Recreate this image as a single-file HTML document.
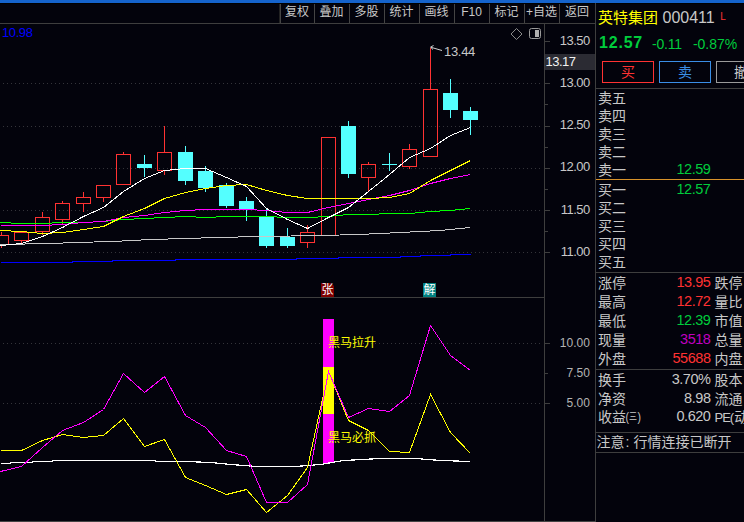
<!DOCTYPE html>
<html lang="zh-CN">
<head>
<meta charset="utf-8">
<title>英特集团 000411</title>
<style>
html,body{margin:0;padding:0;}
body{width:744px;height:522px;overflow:hidden;background:#03030c;font-family:"Liberation Sans","Noto Sans CJK SC",sans-serif;position:relative;}
#app{position:absolute;left:0;top:0;width:744px;height:522px;overflow:hidden;background:#03030c;}
#app>div{position:absolute;box-sizing:border-box;}
.lb{display:flex;align-items:center;white-space:nowrap;line-height:1;}
.lb svg{display:block;flex:none;}
.cj{font-family:"Liberation Sans","Noto Sans CJK SC",sans-serif;flex:none;display:block;line-height:1;}
.ch{position:absolute;display:block;}
.ax{font-size:13px;color:#c8c8c8;letter-spacing:-0.5px;}
.ax2{font-size:12px;color:#b4b4b4;}
.num{font-size:14.5px;letter-spacing:-0.45px;}
</style>
</head>
<body>
<div id="app">
<div style="left:0px;top:0px;width:744px;height:3px;background:#1563cc"></div>
<div style="left:0px;top:3px;width:744px;height:1px;background:#000"></div>
<div style="left:0px;top:23px;width:596px;height:1px;background:#3e3e3e"></div>
<div style="left:279px;top:4px;width:1px;height:19px;background:#222"></div>
<div style="left:280px;top:4px;width:1px;height:19px;background:#444"></div>
<div style="left:314px;top:4px;width:1px;height:19px;background:#444"></div>
<div style="left:349px;top:4px;width:1px;height:19px;background:#444"></div>
<div style="left:384px;top:4px;width:1px;height:19px;background:#444"></div>
<div style="left:419px;top:4px;width:1px;height:19px;background:#444"></div>
<div style="left:454px;top:4px;width:1px;height:19px;background:#444"></div>
<div style="left:489px;top:4px;width:1px;height:19px;background:#444"></div>
<div style="left:524px;top:4px;width:1px;height:19px;background:#444"></div>
<div style="left:559px;top:4px;width:1px;height:19px;background:#444"></div>
<div class="lb" style="left:197.0px;width:200px;justify-content:center;top:5.0px;height:14px;"><span class="cj" style="font-size:12px;color:#c8c8c8;">复权</span></div>
<div class="lb" style="left:231.5px;width:200px;justify-content:center;top:5.0px;height:14px;"><span class="cj" style="font-size:12px;color:#c8c8c8;">叠加</span></div>
<div class="lb" style="left:266.5px;width:200px;justify-content:center;top:5.0px;height:14px;"><span class="cj" style="font-size:12px;color:#c8c8c8;">多股</span></div>
<div class="lb" style="left:301.5px;width:200px;justify-content:center;top:5.0px;height:14px;"><span class="cj" style="font-size:12px;color:#c8c8c8;">统计</span></div>
<div class="lb" style="left:336.5px;width:200px;justify-content:center;top:5.0px;height:14px;"><span class="cj" style="font-size:12px;color:#c8c8c8;">画线</span></div>
<div class="lb" style="left:371.5px;width:200px;justify-content:center;top:5.0px;height:14px;"><span style="font-size:12px;color:#c8c8c8;">F10</span></div>
<div class="lb" style="left:406.5px;width:200px;justify-content:center;top:5.0px;height:14px;"><span class="cj" style="font-size:12px;color:#c8c8c8;">标记</span></div>
<div class="lb" style="left:441.5px;width:200px;justify-content:center;top:5.0px;height:14px;"><span style="font-size:12px;color:#c8c8c8;">+</span><span class="cj" style="font-size:12px;color:#c8c8c8;">自选</span></div>
<div class="lb" style="left:477.0px;width:200px;justify-content:center;top:5.0px;height:14px;"><span class="cj" style="font-size:12px;color:#c8c8c8;">返回</span></div>
<div style="left:544px;top:24px;width:1px;height:498px;background:#3e3e3e"></div>
<div style="left:595px;top:3px;width:1px;height:519px;background:#3e3e3e"></div>
<div style="left:0px;top:297px;width:545px;height:1px;background:#3e3e3e"></div>
<div style="left:0px;top:521px;width:596px;height:1px;background:#444"></div>
<div class="lb" style="left:2px;top:25.5px;height:14px;"><span style="font-size:13px;color:#0000ff;letter-spacing:-0.4px">10.98</span></div>
<div style="left:545px;top:41px;width:5px;height:1px;background:#3e3e3e"></div>
<div class="lb" style="right:154.20000000000005px;top:33.0px;height:14px;"><span class="ax">13.50</span></div>
<div style="left:545px;top:83px;width:5px;height:1px;background:#3e3e3e"></div>
<div class="lb" style="right:154.20000000000005px;top:75.25px;height:14px;"><span class="ax">13.00</span></div>
<div style="left:545px;top:126px;width:5px;height:1px;background:#3e3e3e"></div>
<div class="lb" style="right:154.20000000000005px;top:117.5px;height:14px;"><span class="ax">12.50</span></div>
<div style="left:545px;top:168px;width:5px;height:1px;background:#3e3e3e"></div>
<div class="lb" style="right:154.20000000000005px;top:159.75px;height:14px;"><span class="ax">12.00</span></div>
<div style="left:545px;top:210px;width:5px;height:1px;background:#3e3e3e"></div>
<div class="lb" style="right:154.20000000000005px;top:202.0px;height:14px;"><span class="ax">11.50</span></div>
<div style="left:545px;top:252px;width:5px;height:1px;background:#3e3e3e"></div>
<div class="lb" style="right:154.20000000000005px;top:244.25px;height:14px;"><span class="ax">11.00</span></div>
<div style="left:545px;top:62px;width:3px;height:1px;background:#3e3e3e"></div>
<div style="left:545px;top:104px;width:3px;height:1px;background:#3e3e3e"></div>
<div style="left:545px;top:147px;width:3px;height:1px;background:#3e3e3e"></div>
<div style="left:545px;top:189px;width:3px;height:1px;background:#3e3e3e"></div>
<div style="left:545px;top:231px;width:3px;height:1px;background:#3e3e3e"></div>
<div style="left:545px;top:54px;width:50px;height:16px;background:#2b2b33"></div>
<div class="lb" style="left:545.5px;top:54.0px;height:14px;"><span class="ax" style="color:#f0f0f0">13.17</span></div>
<div style="left:545px;top:343px;width:5px;height:1px;background:#3e3e3e"></div>
<div class="lb" style="right:154.20000000000005px;top:336.0px;height:14px;"><span class="ax2">10.00</span></div>
<div style="left:545px;top:373px;width:3px;height:1px;background:#3e3e3e"></div>
<div class="lb" style="right:154.20000000000005px;top:366.0px;height:14px;"><span class="ax2">7.50</span></div>
<div style="left:545px;top:403px;width:5px;height:1px;background:#3e3e3e"></div>
<div class="lb" style="right:154.20000000000005px;top:396.0px;height:14px;"><span class="ax2">5.00</span></div>
<div style="left:3px;top:83px;width:538px;height:1px;background:repeating-linear-gradient(90deg,#34343a 0 1px,transparent 1px 4px)"></div>
<div style="left:3px;top:126px;width:538px;height:1px;background:repeating-linear-gradient(90deg,#34343a 0 1px,transparent 1px 4px)"></div>
<div style="left:3px;top:168px;width:538px;height:1px;background:repeating-linear-gradient(90deg,#34343a 0 1px,transparent 1px 4px)"></div>
<div style="left:3px;top:210px;width:538px;height:1px;background:repeating-linear-gradient(90deg,#34343a 0 1px,transparent 1px 4px)"></div>
<div style="left:3px;top:252px;width:538px;height:1px;background:repeating-linear-gradient(90deg,#34343a 0 1px,transparent 1px 4px)"></div>
<div style="left:3px;top:343px;width:538px;height:1px;background:repeating-linear-gradient(90deg,#34343a 0 1px,transparent 1px 4px)"></div>
<div style="left:3px;top:403px;width:538px;height:1px;background:repeating-linear-gradient(90deg,#34343a 0 1px,transparent 1px 4px)"></div>
<svg class="ch" style="left:0;top:0" width="545" height="298" viewBox="0 0 545 298"><rect x="1" y="232" width="1" height="3" fill="#ff3232"/><rect x="1" y="245" width="1" height="3" fill="#ff3232"/><rect x="-5.5" y="235.5" width="14" height="9" fill="none" stroke="#ff3232" stroke-width="1"/><rect x="21" y="231" width="1" height="1" fill="#ff3232"/><rect x="21" y="241" width="1" height="2" fill="#ff3232"/><rect x="14.5" y="232.5" width="14" height="8" fill="none" stroke="#ff3232" stroke-width="1"/><rect x="42" y="212" width="1" height="5" fill="#ff3232"/><rect x="42" y="232" width="1" height="3" fill="#ff3232"/><rect x="35.5" y="217.5" width="14" height="14" fill="none" stroke="#ff3232" stroke-width="1"/><rect x="62" y="201" width="1" height="2" fill="#ff3232"/><rect x="62" y="220" width="1" height="4" fill="#ff3232"/><rect x="55.5" y="203.5" width="14" height="16" fill="none" stroke="#ff3232" stroke-width="1"/><rect x="83" y="192" width="1" height="5" fill="#ff3232"/><rect x="83" y="204" width="1" height="8" fill="#ff3232"/><rect x="76.5" y="197.5" width="14" height="6" fill="none" stroke="#ff3232" stroke-width="1"/><rect x="103" y="198" width="1" height="4" fill="#ff3232"/><rect x="96.5" y="185.5" width="14" height="12" fill="none" stroke="#ff3232" stroke-width="1"/><rect x="123" y="152" width="1" height="2" fill="#ff3232"/><rect x="116.5" y="154.5" width="14" height="30" fill="none" stroke="#ff3232" stroke-width="1"/><rect x="144" y="155" width="1" height="22" fill="#54ffff"/><rect x="137" y="164" width="15" height="4" fill="#54ffff"/><rect x="164" y="126" width="1" height="26" fill="#ff3232"/><rect x="164" y="171" width="1" height="4" fill="#ff3232"/><rect x="157.5" y="152.5" width="14" height="18" fill="none" stroke="#ff3232" stroke-width="1"/><rect x="185" y="146" width="1" height="39" fill="#54ffff"/><rect x="178" y="152" width="15" height="29" fill="#54ffff"/><rect x="205" y="166" width="1" height="26" fill="#54ffff"/><rect x="198" y="171" width="15" height="17" fill="#54ffff"/><rect x="226" y="183" width="1" height="25" fill="#54ffff"/><rect x="219" y="185" width="15" height="21" fill="#54ffff"/><rect x="246" y="197" width="1" height="24" fill="#54ffff"/><rect x="239" y="201" width="15" height="8" fill="#54ffff"/><rect x="266" y="208" width="1" height="40" fill="#54ffff"/><rect x="259" y="216" width="15" height="30" fill="#54ffff"/><rect x="287" y="228" width="1" height="20" fill="#54ffff"/><rect x="280" y="237" width="15" height="9" fill="#54ffff"/><rect x="307" y="225" width="1" height="7" fill="#ff3232"/><rect x="307" y="243" width="1" height="5" fill="#ff3232"/><rect x="300.5" y="232.5" width="14" height="10" fill="none" stroke="#ff3232" stroke-width="1"/><rect x="321.5" y="137.5" width="14" height="98" fill="none" stroke="#ff3232" stroke-width="1"/><rect x="348" y="121" width="1" height="57" fill="#54ffff"/><rect x="341" y="126" width="15" height="48" fill="#54ffff"/><rect x="368" y="162" width="1" height="2" fill="#ff3232"/><rect x="368" y="178" width="1" height="13" fill="#ff3232"/><rect x="361.5" y="164.5" width="14" height="13" fill="none" stroke="#ff3232" stroke-width="1"/><rect x="389" y="153" width="1" height="18" fill="#54ffff"/><rect x="382" y="164" width="15" height="1" fill="#54ffff"/><rect x="409" y="144" width="1" height="5" fill="#ff3232"/><rect x="409" y="167" width="1" height="2" fill="#ff3232"/><rect x="402.5" y="149.5" width="14" height="17" fill="none" stroke="#ff3232" stroke-width="1"/><rect x="430" y="48" width="1" height="41" fill="#ff3232"/><rect x="423.5" y="89.5" width="14" height="67" fill="none" stroke="#ff3232" stroke-width="1"/><rect x="450" y="79" width="1" height="39" fill="#54ffff"/><rect x="443" y="93" width="15" height="17" fill="#54ffff"/><rect x="470" y="107" width="1" height="28" fill="#54ffff"/><rect x="463" y="111" width="15" height="9" fill="#54ffff"/><polyline points="0.5,262.5 72.5,262.5 72.5,261.5 112.5,261.5 112.5,260.5 175.5,260.5 175.5,259.5 296.5,259.5 296.5,258.5 338.5,258.5 338.5,257.5 400.5,257.5 400.5,256.5 420.5,256.5 420.5,255.5 450.5,255.5 450.5,254.5 470.5,254.5" fill="none" stroke="#0000ff" stroke-width="1.0" shape-rendering="crispEdges"/><polyline points="0.5,244.5 50.5,243.5 75.5,242.5 112.5,241.5 150.5,239.5 186.5,238.5 216.5,237.5 260.5,236.5 321.5,235.5 358.5,234.5 400.5,232.5 440.5,230.5 470.5,227.5" fill="none" stroke="#c8c8c8" stroke-width="1.0" shape-rendering="crispEdges"/><polyline points="0.5,222.5 21.5,223.5 42.5,223.5 62.5,222.5 83.5,222.5 103.5,221.5 123.5,219.5 144.5,218.5 164.5,217.5 185.5,216.5 205.5,217.5 226.5,216.5 246.5,216.5 266.5,216.5 287.5,217.5 307.5,217.5 328.5,216.5 348.5,214.5 368.5,214.5 389.5,213.5 409.5,213.5 430.5,211.5 450.5,210.5 470.5,208.5" fill="none" stroke="#00ff00" stroke-width="1.0" shape-rendering="crispEdges"/><polyline points="0.5,225.5 21.5,225.5 42.5,225.5 62.5,224.5 83.5,222.5 103.5,221.5 123.5,217.5 144.5,215.5 164.5,212.5 185.5,210.5 205.5,209.5 226.5,209.5 246.5,209.5 266.5,210.5 287.5,212.5 307.5,212.5 328.5,207.5 348.5,203.5 368.5,199.5 389.5,195.5 409.5,190.5 430.5,183.5 450.5,178.5 470.5,174.5" fill="none" stroke="#ff00ff" stroke-width="1.0" shape-rendering="crispEdges"/><polyline points="0.5,230.5 21.5,231.5 42.5,233.5 62.5,232.5 83.5,229.5 103.5,226.5 123.5,216.5 144.5,208.5 164.5,198.5 185.5,192.5 205.5,188.5 226.5,185.5 246.5,184.5 266.5,190.5 287.5,195.5 307.5,198.5 328.5,198.5 348.5,198.5 368.5,198.5 389.5,197.5 409.5,193.5 430.5,180.5 450.5,170.5 470.5,160.5" fill="none" stroke="#ffff00" stroke-width="1.0" shape-rendering="crispEdges"/><polyline points="0.5,245.5 21.5,243.5 42.5,236.5 62.5,227.5 83.5,216.5 103.5,207.5 123.5,191.5 144.5,178.5 164.5,170.5 185.5,168.5 205.5,168.5 226.5,177.5 246.5,186.5 266.5,208.5 287.5,219.5 307.5,228.5 328.5,217.5 348.5,207.5 368.5,191.5 389.5,174.5 409.5,157.5 430.5,148.5 450.5,135.5 470.5,127.5" fill="none" stroke="#ffffff" stroke-width="1.0" shape-rendering="crispEdges"/><path d="M442 50.5 L431 47.3 M433.5 45.5 L430.5 47.2 L433 49.5" fill="none" stroke="#d0d0d0" stroke-width="1"/><path d="M516.5 28.5 L522 34 L516.5 39.5 L511 34 Z" fill="none" stroke="#8a8a8a" stroke-width="1"/><rect x="529.5" y="28.5" width="11" height="10" rx="2" fill="none" stroke="#9a9a9a" stroke-width="1"/><rect x="535" y="30" width="4" height="7" fill="#b0b0b0"/></svg>
<div class="lb" style="left:444px;top:44.2px;height:14px;"><span style="font-size:13px;color:#c8c8c8;letter-spacing:-0.3px">13.44</span></div>
<div style="left:321px;top:283px;width:13px;height:14px;background:#800000;clip-path:polygon(0 0,10px 0,13px 3px,13px 14px,0 14px)"></div>
<div class="lb" style="left:227.5px;width:200px;justify-content:center;top:284.0px;height:12px;"><span class="cj" style="font-size:12px;color:#ffffff;">张</span></div>
<div style="left:423px;top:283px;width:13px;height:14px;background:#008080"></div>
<div class="lb" style="left:329.5px;width:200px;justify-content:center;top:284.0px;height:12px;"><span class="cj" style="font-size:12px;color:#ffffff;">解</span></div>
<svg class="ch" style="left:0;top:298px" width="545" height="222" viewBox="0 298 545 222"><rect x="323" y="319" width="11" height="144" fill="#ff00ff"/><rect x="323" y="367" width="11" height="47" fill="#ffff00"/><polyline points="0.5,463.5 10.5,463.5 10.5,462.5 32.5,462.5 32.5,461.5 52.5,461.5 52.5,460.5 155.5,460.5 155.5,461.5 186.5,461.5 210.5,462.5 230.5,464.5 257.5,466.5 295.5,466.5 320.5,464.5 343.5,460.5 380.5,458.5 415.5,458.5 440.5,460.5 470.5,461.5" fill="none" stroke="#ffffff" stroke-width="1.2" shape-rendering="crispEdges"/><polyline points="0.5,450.5 21.5,450.5 42.5,440.5 62.5,434.5 83.5,437.5 103.5,435.5 123.5,418.5 144.5,446.5 164.5,439.5 185.5,477.5 205.5,485.5 226.5,494.5 246.5,489.5 266.5,512.5 287.5,495.5 307.5,467.5 328.5,371.5 348.5,420.5 368.5,430.5 389.5,451.5 409.5,452.5 430.5,394.5 450.5,432.5 470.5,453.5" fill="none" stroke="#ffff00" stroke-width="1.0" shape-rendering="crispEdges"/><polyline points="0.5,471.5 21.5,466.5 42.5,447.5 62.5,430.5 83.5,422.5 103.5,409.5 123.5,373.5 144.5,392.5 164.5,376.5 185.5,415.5 205.5,427.5 226.5,450.5 246.5,456.5 266.5,502.5 287.5,502.5 307.5,484.5 328.5,371.5 348.5,417.5 368.5,408.5 389.5,411.5 409.5,395.5 430.5,325.5 450.5,355.5 470.5,370.5" fill="none" stroke="#ff00ff" stroke-width="1.0" shape-rendering="crispEdges"/></svg>
<div class="lb" style="left:328px;top:337.0px;height:12px;"><span class="cj" style="font-size:12px;color:#ffff00;">黑马拉升</span></div>
<div class="lb" style="left:328px;top:432.0px;height:12px;"><span class="cj" style="font-size:12px;color:#ffff00;">黑马必抓</span></div>
<div class="lb" style="left:598px;top:8.5px;height:18px;"><span class="cj" style="font-size:15px;color:#ffff00;">英特集团</span><span style="font-size:16px;color:#c8c8c8;margin-left:4.5px">000411</span><span style="font-size:10px;color:#ff3232;margin-left:5.5px;position:relative;top:-1px">L</span></div>
<div class="lb" style="left:599px;top:32.5px;height:20px;"><span style="font-size:16px;font-weight:bold;color:#00cc3c;letter-spacing:0.8px">12.57</span><span style="font-size:14px;color:#00cc3c;margin-left:9px;letter-spacing:-0.2px;position:relative;top:1px">-0.11</span><span style="font-size:14px;color:#00cc3c;margin-left:11px;position:relative;top:1px">-0.87%</span></div>
<div style="left:602px;top:61px;width:52px;height:22px;border:1px solid #ff3232"></div>
<div class="lb" style="left:528px;width:200px;justify-content:center;top:65.0px;height:14px;"><span class="cj" style="font-size:14px;color:#ff3232;">买</span></div>
<div style="left:659px;top:61px;width:52px;height:22px;border:1px solid #3a8ee6"></div>
<div class="lb" style="left:585px;width:200px;justify-content:center;top:65.0px;height:14px;"><span class="cj" style="font-size:14px;color:#3a8ee6;">卖</span></div>
<div style="left:716px;top:61px;width:52px;height:22px;border:1px solid #9a9a9a"></div>
<div class="lb" style="left:734px;top:65.0px;height:14px;"><span class="cj" style="font-size:14px;color:#c8c8c8;">撤</span></div>
<div style="left:596px;top:88px;width:148px;height:1px;background:#3e3e3e"></div>
<div class="lb" style="left:598px;top:91.0px;height:14px;"><span class="cj" style="font-size:14px;color:#c8c8c8;">卖五</span></div>
<div class="lb" style="left:598px;top:109.0px;height:14px;"><span class="cj" style="font-size:14px;color:#c8c8c8;">卖四</span></div>
<div class="lb" style="left:598px;top:127.0px;height:14px;"><span class="cj" style="font-size:14px;color:#c8c8c8;">卖三</span></div>
<div class="lb" style="left:598px;top:145.0px;height:14px;"><span class="cj" style="font-size:14px;color:#c8c8c8;">卖二</span></div>
<div class="lb" style="left:598px;top:163.0px;height:14px;"><span class="cj" style="font-size:14px;color:#c8c8c8;">卖一</span></div>
<div class="lb" style="right:33.5px;top:161.5px;height:16px;"><span class="num" style="color:#00cc3c">12.59</span></div>
<div style="left:596px;top:179px;width:148px;height:1px;background:#d8922a"></div>
<div class="lb" style="left:598px;top:183.0px;height:14px;"><span class="cj" style="font-size:14px;color:#c8c8c8;">买一</span></div>
<div class="lb" style="right:33.5px;top:181.5px;height:16px;"><span class="num" style="color:#00cc3c">12.57</span></div>
<div class="lb" style="left:598px;top:201.0px;height:14px;"><span class="cj" style="font-size:14px;color:#c8c8c8;">买二</span></div>
<div class="lb" style="left:598px;top:219.0px;height:14px;"><span class="cj" style="font-size:14px;color:#c8c8c8;">买三</span></div>
<div class="lb" style="left:598px;top:237.0px;height:14px;"><span class="cj" style="font-size:14px;color:#c8c8c8;">买四</span></div>
<div class="lb" style="left:598px;top:255.0px;height:14px;"><span class="cj" style="font-size:14px;color:#c8c8c8;">买五</span></div>
<div style="left:596px;top:272px;width:148px;height:1px;background:#3e3e3e"></div>
<div class="lb" style="left:598px;top:276.0px;height:14px;"><span class="cj" style="font-size:14px;color:#c8c8c8;">涨停</span></div>
<div class="lb" style="right:33.5px;top:274.5px;height:16px;"><span class="num" style="color:#ff3232">13.95</span></div>
<div class="lb" style="left:714.5px;top:276.0px;height:14px;"><span class="cj" style="font-size:14px;color:#c8c8c8;">跌停</span></div>
<div class="lb" style="left:598px;top:295.0px;height:14px;"><span class="cj" style="font-size:14px;color:#c8c8c8;">最高</span></div>
<div class="lb" style="right:33.5px;top:293.5px;height:16px;"><span class="num" style="color:#ff3232">12.72</span></div>
<div class="lb" style="left:714.5px;top:295.0px;height:14px;"><span class="cj" style="font-size:14px;color:#c8c8c8;">量比</span></div>
<div class="lb" style="left:598px;top:314.0px;height:14px;"><span class="cj" style="font-size:14px;color:#c8c8c8;">最低</span></div>
<div class="lb" style="right:33.5px;top:312.5px;height:16px;"><span class="num" style="color:#00cc3c">12.39</span></div>
<div class="lb" style="left:714.5px;top:314.0px;height:14px;"><span class="cj" style="font-size:14px;color:#c8c8c8;">市值</span></div>
<div class="lb" style="left:598px;top:333.0px;height:14px;"><span class="cj" style="font-size:14px;color:#c8c8c8;">现量</span></div>
<div class="lb" style="right:33.5px;top:331.5px;height:16px;"><span class="num" style="color:#c000c0">3518</span></div>
<div class="lb" style="left:714.5px;top:333.0px;height:14px;"><span class="cj" style="font-size:14px;color:#c8c8c8;">总量</span></div>
<div class="lb" style="left:598px;top:352.0px;height:14px;"><span class="cj" style="font-size:14px;color:#c8c8c8;">外盘</span></div>
<div class="lb" style="right:33.5px;top:350.5px;height:16px;"><span class="num" style="color:#ff3232">55688</span></div>
<div class="lb" style="left:714.5px;top:352.0px;height:14px;"><span class="cj" style="font-size:14px;color:#c8c8c8;">内盘</span></div>
<div style="left:596px;top:369px;width:148px;height:1px;background:#3e3e3e"></div>
<div class="lb" style="left:598px;top:372.5px;height:14px;"><span class="cj" style="font-size:14px;color:#c8c8c8;">换手</span></div>
<div class="lb" style="right:33.5px;top:371.0px;height:16px;"><span class="num" style="color:#c8c8c8">3.70%</span></div>
<div class="lb" style="left:714.5px;top:372.5px;height:14px;"><span class="cj" style="font-size:14px;color:#c8c8c8;">股本</span></div>
<div class="lb" style="left:598px;top:391.5px;height:14px;"><span class="cj" style="font-size:14px;color:#c8c8c8;">净资</span></div>
<div class="lb" style="right:33.5px;top:390.0px;height:16px;"><span class="num" style="color:#c8c8c8">8.98</span></div>
<div class="lb" style="left:714.5px;top:391.5px;height:14px;"><span class="cj" style="font-size:14px;color:#c8c8c8;">流通</span></div>
<div class="lb" style="left:598px;top:410.0px;height:14px;"><span class="cj" style="font-size:14px;color:#c8c8c8;">收益</span><span style="font-size:13px;color:#c8c8c8;margin-left:-1px;position:relative;top:-0.5px;transform:scaleX(0.8)">(</span><span class="cj" style="font-size:10px;color:#c8c8c8;width:8px;transform:scaleX(0.8);transform-origin:left center;">三</span><span style="font-size:13px;color:#c8c8c8;position:relative;top:-0.5px;transform:scaleX(0.8)">)</span></div>
<div class="lb" style="right:33.5px;top:408.5px;height:16px;"><span class="num" style="color:#c8c8c8">0.620</span></div>
<div class="lb" style="left:714.5px;top:410.0px;height:14px;"><span style="font-size:13px;color:#c8c8c8;letter-spacing:-1px;margin-right:1px;">PE(</span><span class="cj" style="font-size:14px;color:#c8c8c8;">动</span></div>
<div style="left:596px;top:432px;width:148px;height:1px;background:#3e3e3e"></div>
<div class="lb" style="left:596.5px;top:434.5px;height:14px;"><span class="cj" style="font-size:14px;color:#c8c8c8;">注意</span><span style="font-size:14px;color:#c8c8c8;margin:0 4px 0 1px">:</span><span class="cj" style="font-size:14px;color:#c8c8c8;">行情连接已断开</span></div>
<div style="left:596px;top:452px;width:148px;height:1px;background:#3e3e3e"></div>
</div>
</body>
</html>
